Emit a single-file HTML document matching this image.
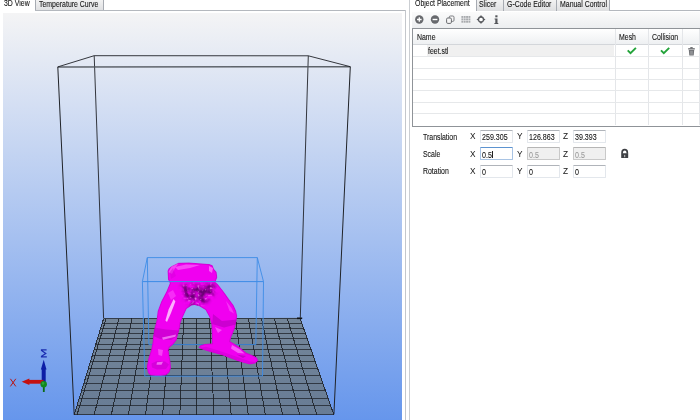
<!DOCTYPE html>
<html><head><meta charset="utf-8">
<style>
*{box-sizing:border-box;margin:0;padding:0}
html,body{width:700px;height:420px;overflow:hidden;background:#fff;font-family:"Liberation Sans",sans-serif;color:#111}
.a{position:absolute}
.t{position:absolute;white-space:nowrap;line-height:normal;transform-origin:0 0;-webkit-text-stroke:0.1px currentColor}
.tab{position:absolute;border:1px solid #a7abb2;border-bottom:none;background:linear-gradient(#f4f4f4,#dedfe1)}
.tb{position:absolute;height:13px;width:33px;border:1px solid #e3e7ec;border-top-color:#b0b4ba;background:#fff;border-radius:1px}
.tb.dis{background:#f0f0f0;border-color:#c9c9c9;border-top-color:#b5b5b5}
</style></head><body>

<svg width="700" height="420" style="position:absolute;left:0;top:0">
<defs><linearGradient id="bg" x1="0" y1="0" x2="0" y2="1"><stop offset="0" stop-color="#f4f4f5"/><stop offset="1" stop-color="#6696ec"/></linearGradient><clipPath id="vc"><rect x="3" y="13" width="399" height="407"/></clipPath></defs>
<g clip-path="url(#vc)">
<rect x="3" y="13" width="399" height="407" fill="url(#bg)"/>
<line x1="94.2" y1="55.7" x2="308.3" y2="55.8" stroke="#202328" stroke-width="0.9" stroke-opacity="1"/>
<line x1="94.2" y1="55.7" x2="103.6" y2="318.6" stroke="#202328" stroke-width="0.9" stroke-opacity="1"/>
<line x1="308.3" y1="55.8" x2="300.3" y2="317.8" stroke="#202328" stroke-width="0.9" stroke-opacity="1"/>
<defs><linearGradient id="bed" x1="0" y1="0" x2="0" y2="1"><stop offset="0" stop-color="#748699"/><stop offset="1" stop-color="#687c95"/></linearGradient></defs>
<polygon points="103.6,318.6 300.3,317.8 333.9,414.3 74.2,414.9" fill="url(#bed)"/>
<line x1="103.5" y1="318.9" x2="300.7" y2="318.9" stroke="#22272e" stroke-width="1" stroke-opacity="0.8" shape-rendering="crispEdges"/>
<line x1="102.0" y1="323.9" x2="302.4" y2="323.9" stroke="#22272e" stroke-width="1" stroke-opacity="0.8" shape-rendering="crispEdges"/>
<line x1="100.5" y1="328.6" x2="304.1" y2="328.6" stroke="#22272e" stroke-width="1" stroke-opacity="0.8" shape-rendering="crispEdges"/>
<line x1="99.0" y1="333.6" x2="305.8" y2="333.6" stroke="#22272e" stroke-width="1" stroke-opacity="0.8" shape-rendering="crispEdges"/>
<line x1="97.5" y1="338.6" x2="307.5" y2="338.6" stroke="#22272e" stroke-width="1" stroke-opacity="0.8" shape-rendering="crispEdges"/>
<line x1="95.8" y1="344.3" x2="309.5" y2="344.3" stroke="#22272e" stroke-width="1" stroke-opacity="0.8" shape-rendering="crispEdges"/>
<line x1="94.1" y1="349.7" x2="311.4" y2="349.7" stroke="#22272e" stroke-width="1" stroke-opacity="0.8" shape-rendering="crispEdges"/>
<line x1="92.3" y1="355.7" x2="313.5" y2="355.7" stroke="#22272e" stroke-width="1" stroke-opacity="0.8" shape-rendering="crispEdges"/>
<line x1="90.4" y1="361.7" x2="315.6" y2="361.7" stroke="#22272e" stroke-width="1" stroke-opacity="0.8" shape-rendering="crispEdges"/>
<line x1="88.3" y1="368.6" x2="318.0" y2="368.6" stroke="#22272e" stroke-width="1" stroke-opacity="0.8" shape-rendering="crispEdges"/>
<line x1="86.2" y1="375.6" x2="320.4" y2="375.6" stroke="#22272e" stroke-width="1" stroke-opacity="0.8" shape-rendering="crispEdges"/>
<line x1="83.9" y1="383.1" x2="323.0" y2="383.1" stroke="#22272e" stroke-width="1" stroke-opacity="0.8" shape-rendering="crispEdges"/>
<line x1="81.7" y1="390.4" x2="325.6" y2="390.4" stroke="#22272e" stroke-width="1" stroke-opacity="0.8" shape-rendering="crispEdges"/>
<line x1="79.3" y1="398.2" x2="328.3" y2="398.2" stroke="#22272e" stroke-width="1" stroke-opacity="0.8" shape-rendering="crispEdges"/>
<line x1="77.0" y1="405.6" x2="330.9" y2="405.6" stroke="#22272e" stroke-width="1" stroke-opacity="0.8" shape-rendering="crispEdges"/>
<line x1="74.3" y1="414.5" x2="334.0" y2="414.5" stroke="#22272e" stroke-width="1" stroke-opacity="0.8" shape-rendering="crispEdges"/>
<line x1="103.6" y1="318.6" x2="74.2" y2="414.9" stroke="#1b1f24" stroke-width="1" stroke-opacity="0.85" shape-rendering="crispEdges"/>
<line x1="106.1" y1="318.6" x2="77.0" y2="414.9" stroke="#1b1f24" stroke-width="1" stroke-opacity="0.85" shape-rendering="crispEdges"/>
<line x1="119.0" y1="318.6" x2="94.1" y2="414.9" stroke="#1b1f24" stroke-width="1" stroke-opacity="0.85" shape-rendering="crispEdges"/>
<line x1="132.0" y1="318.6" x2="111.3" y2="414.9" stroke="#1b1f24" stroke-width="1" stroke-opacity="0.85" shape-rendering="crispEdges"/>
<line x1="144.9" y1="318.6" x2="128.4" y2="414.9" stroke="#1b1f24" stroke-width="1" stroke-opacity="0.85" shape-rendering="crispEdges"/>
<line x1="157.9" y1="318.6" x2="145.5" y2="414.9" stroke="#1b1f24" stroke-width="1" stroke-opacity="0.85" shape-rendering="crispEdges"/>
<line x1="170.8" y1="318.6" x2="162.6" y2="414.9" stroke="#1b1f24" stroke-width="1" stroke-opacity="0.85" shape-rendering="crispEdges"/>
<line x1="183.7" y1="318.6" x2="179.8" y2="414.9" stroke="#1b1f24" stroke-width="1" stroke-opacity="0.85" shape-rendering="crispEdges"/>
<line x1="196.7" y1="318.6" x2="196.9" y2="414.9" stroke="#1b1f24" stroke-width="1" stroke-opacity="0.85" shape-rendering="crispEdges"/>
<line x1="209.6" y1="318.6" x2="214.0" y2="414.9" stroke="#1b1f24" stroke-width="1" stroke-opacity="0.85" shape-rendering="crispEdges"/>
<line x1="222.6" y1="318.6" x2="231.2" y2="414.9" stroke="#1b1f24" stroke-width="1" stroke-opacity="0.85" shape-rendering="crispEdges"/>
<line x1="235.5" y1="318.6" x2="248.3" y2="414.9" stroke="#1b1f24" stroke-width="1" stroke-opacity="0.85" shape-rendering="crispEdges"/>
<line x1="248.4" y1="318.6" x2="265.4" y2="414.9" stroke="#1b1f24" stroke-width="1" stroke-opacity="0.85" shape-rendering="crispEdges"/>
<line x1="261.4" y1="318.6" x2="282.6" y2="414.9" stroke="#1b1f24" stroke-width="1" stroke-opacity="0.85" shape-rendering="crispEdges"/>
<line x1="274.3" y1="318.6" x2="299.7" y2="414.9" stroke="#1b1f24" stroke-width="1" stroke-opacity="0.85" shape-rendering="crispEdges"/>
<line x1="287.3" y1="318.6" x2="316.8" y2="414.9" stroke="#1b1f24" stroke-width="1" stroke-opacity="0.85" shape-rendering="crispEdges"/>
<line x1="300.2" y1="318.6" x2="333.9" y2="414.9" stroke="#1b1f24" stroke-width="1" stroke-opacity="0.85" shape-rendering="crispEdges"/>
<line x1="57.8" y1="66.9" x2="350.3" y2="66.7" stroke="#50555c" stroke-width="1.5" stroke-opacity="0.9"/>
<line x1="297.0" y1="318.3" x2="302.2" y2="318.3" stroke="#101216" stroke-width="1.6" stroke-opacity="1"/>
<line x1="57.8" y1="66.9" x2="94.2" y2="55.7" stroke="#202328" stroke-width="0.9" stroke-opacity="1"/>
<line x1="350.3" y1="66.7" x2="308.3" y2="55.8" stroke="#202328" stroke-width="0.9" stroke-opacity="1"/>
<line x1="57.8" y1="66.9" x2="74.2" y2="414.9" stroke="#202328" stroke-width="1.0" stroke-opacity="1"/>
<line x1="350.3" y1="66.7" x2="333.9" y2="414.3" stroke="#202328" stroke-width="1.0" stroke-opacity="1"/>
<line x1="148.9" y1="344.6" x2="255.8" y2="344.6" stroke="#3d8ce6" stroke-width="0.9" stroke-opacity="1"/>
<line x1="147.3" y1="257.6" x2="148.9" y2="344.6" stroke="#3d8ce6" stroke-width="0.9" stroke-opacity="1"/>
<line x1="257.3" y1="257.6" x2="255.8" y2="344.6" stroke="#3d8ce6" stroke-width="0.9" stroke-opacity="1"/>
<defs>
<clipPath id="objclip"><path id="objpath" d="M167.5,271.1 L168.6,268.4 L171.4,266.2 L178.4,262.8 L188.9,262.4 L209.3,264.1 L212.5,265.2 L214,268.9 L216.6,272 L217.3,277.5 L215.4,282 L217.9,284.3 L223.6,291.4 L228.6,298.6 L233.6,305.2 L236.2,311 L237.2,316 L236.5,320.5 L235.2,327.5 L233.2,332.8 L231.4,337 L230.2,341.2 L235,344 L240.5,347.8 L246,352.5 L252.1,355.1 L256.5,357.3 L258.4,360.5 L255.3,363.5 L250,364.5 L243,362.7 L236.7,360.7 L222.1,355.3 L210,351.9 L202.1,349.5 L198.4,347.4 L200.8,345.1 L204.5,344 L212,343.2 L211.8,336 L211.4,324.3 L209.3,317.1 L205.5,310 L199.3,306.3 L194.5,305 L191.5,305.6 L186.6,309 L182.7,317.6 L180.6,323 L179.8,328.3 L178.6,332.6 L177.4,337 L176.6,340.2 L173.3,344.6 L169.6,347.4 L168.6,350 L169.5,356 L170.6,362 L171,368 L169.4,372.6 L165.8,375.4 L158,376.2 L150.2,375.6 L147.8,372.8 L146.7,367 L148.3,358.5 L151.2,349.5 L152.6,342 L153,337.1 L154.4,328.6 L156.6,320 L157.6,311.2 L161.2,301.4 L166.4,291.4 L169.8,283.2 L168,279.6 Z"/></clipPath>
<filter id="tex" x="0" y="0" width="1" height="1" color-interpolation-filters="sRGB">
<feTurbulence type="fractalNoise" baseFrequency="0.18" numOctaves="2" seed="11"/>
<feColorMatrix type="matrix" values="0 0 0 0 0.42  0 0 0 0 0  0 0 0 0 0.46  2.6 0 0 0 -0.85"/>
<feGaussianBlur stdDeviation="0.5"/>
</filter>
<filter id="tex2" x="0" y="0" width="1" height="1" color-interpolation-filters="sRGB">
<feTurbulence type="fractalNoise" baseFrequency="0.4" numOctaves="1" seed="5"/>
<feColorMatrix type="matrix" values="0 0 0 0 1  0 0 0 0 0.75  0 0 0 0 1  0 3 0 0 -1.75"/>
</filter>
<radialGradient id="waistmask" cx="0.5" cy="0.5" r="0.5"><stop offset="0" stop-color="#fff"/><stop offset="0.7" stop-color="#fff"/><stop offset="1" stop-color="#000"/></radialGradient>
<filter id="mblur"><feGaussianBlur stdDeviation="2"/></filter><mask id="wm"><path d="M181,285 L214,284 L216,291 L209,300 L201,305.5 L191,305.5 L185,299 Z" fill="#fff" filter="url(#mblur)"/></mask>
</defs>
<g clip-path="url(#objclip)">
<use href="#objpath" fill="#f000f0"/>
<use href="#objpath" fill="none" stroke="#a800b0" stroke-width="2.2" stroke-opacity="0.35"/>
<!-- waist band highlights -->
<path d="M175,267 L186,264.5 L200,265 L190,268 L178,270 Z" fill="#ff80ff" fill-opacity="0.55"/>
<path d="M168.5,272 L171.5,266.5 L178.6,263.2 L175,268 L172,274 Z" fill="#ff90ff" fill-opacity="0.45"/>
<path d="M170,272 L173,268 L176,276 L171,279 Z" fill="#d000d8" fill-opacity="0.45"/>
<path d="M209,266 L213,268 L212,273 L209,271 Z" fill="#ff9cff" fill-opacity="0.6"/>
<!-- dark textured waist -->
<path d="M188,288 L200,285 L213,286 L212,292 L205,299 L198,302 L192,300 L189,294 Z" fill="#8a0094" fill-opacity="0.35"/>
<rect x="165" y="280" width="60" height="28" fill="#000" filter="url(#tex)" mask="url(#wm)"/>
<rect x="165" y="280" width="60" height="28" filter="url(#tex2)" mask="url(#wm)"/>
<!-- left leg highlight -->
<path d="M173.6,299 L175.4,301.5 L171,313 L167,322 L165.4,320.5 L168.6,309.5 Z" fill="#ffc0ff" fill-opacity="0.9"/>
<path d="M168,293 L173,290 L176,296 L171,300 Z" fill="#ff70ff" fill-opacity="0.4"/>
<!-- left knee band -->
<path d="M154,327.5 L166,329.5 L179.5,330.5 L177.5,336 L171,340 L160,339 L153.5,336 Z" fill="#b400bc" fill-opacity="0.5"/>
<path d="M162,337.5 L176,334.5 L175.3,336.8 L163,339.8 Z" fill="#ffa0ff" fill-opacity="0.65"/>
<!-- left foot shoe details -->
<path d="M151.5,363.5 L157,361 L165,361.5 L169,364.5 L166,369 L157,369.5 L152,367.5 Z" fill="#b800c0" fill-opacity="0.45"/>
<path d="M157,362.3 L163,361.8 L161.5,364.8 L156.5,364.8 Z" fill="#ffa8ff" fill-opacity="0.6"/>
<path d="M158,349 L163,350 L162,356 L158.5,355 Z" fill="#ff90ff" fill-opacity="0.45"/>
<!-- right leg shading -->
<path d="M213,314 L222,321 L236.8,319.5 L236,324.5 L224,327.5 L212.2,324 Z" fill="#a000aa" fill-opacity="0.45"/>
<path d="M226,301 L231.5,308 L234,313.5 L229.5,311 Z" fill="#ff80ff" fill-opacity="0.4"/>
<path d="M215,327 L222,330 L218,333 Z" fill="#ff90ff" fill-opacity="0.5"/>
<!-- right foot -->
<path d="M199.5,348 L212,351.5 L236.5,359.5 L250.5,363.5 L256.5,362 L250,361.5 L236,356.5 L220,351 L206,346.8 Z" fill="#c000c8" fill-opacity="0.4"/>
<path d="M232,345 L240,349.5 L244.5,353.5 L238,353 L231,348.5 Z" fill="#ffa0ff" fill-opacity="0.55"/>
<path d="M236.5,354.5 L246,356 L243,358 Z" fill="#a000a8" fill-opacity="0.5"/>
</g>

<line x1="147.3" y1="257.6" x2="257.3" y2="257.6" stroke="#3d8ce6" stroke-width="0.9" stroke-opacity="1"/>
<line x1="142.4" y1="281.6" x2="263.5" y2="281.6" stroke="#3d8ce6" stroke-width="1.0" stroke-opacity="1"/>
<line x1="147.3" y1="257.6" x2="142.4" y2="281.6" stroke="#3d8ce6" stroke-width="0.9" stroke-opacity="1"/>
<line x1="257.3" y1="257.6" x2="263.5" y2="281.6" stroke="#3d8ce6" stroke-width="0.9" stroke-opacity="1"/>
<line x1="142.4" y1="281.6" x2="144.8" y2="376.2" stroke="#3d8ce6" stroke-width="0.9" stroke-opacity="1"/>
<line x1="263.5" y1="281.6" x2="262.5" y2="376.0" stroke="#3d8ce6" stroke-width="0.9" stroke-opacity="1"/>
<line x1="144.8" y1="376.2" x2="262.5" y2="376.0" stroke="#3d8ce6" stroke-width="0.9" stroke-opacity="1"/>
<g><path d="M40.9,349.8 H46.6 M41.2,350.2 L45.8,353.4 L41.2,356.6 M40.9,356.8 H46.8" fill="none" stroke="#1a2cb0" stroke-width="1.2"/><polygon points="43.7,359.8 40.9,369.4 46.5,369.4" fill="#0c1ea6"/><rect x="41.7" y="369" width="4" height="13.5" fill="#0c1ea6"/><polygon points="21.7,381.7 29.4,378.5 29.4,385" fill="#c41010"/><rect x="29" y="379.9" width="14.5" height="3.8" fill="#c41010"/><rect x="42.9" y="384" width="1.8" height="8" fill="#0b6a16"/><circle cx="43.7" cy="384.2" r="3.2" fill="#12881e"/><circle cx="43" cy="383.4" r="1.3" fill="#3cb84a" fill-opacity="0.6"/><path d="M10.4,378.8 L15.8,386.4 M15.8,378.8 L10.4,386.4" stroke="#b81414" stroke-width="1.0"/></g>
</g></svg>
<div class="t" style="left:3.60px;top:-2.14px;font-size:9px;transform:scaleX(0.77);color:#141414">3D View</div>
<div class="tab" style="left:35px;top:-2px;width:68.5px;height:12.5px"></div>
<div class="t" style="left:38.60px;top:-1.04px;font-size:9px;transform:scaleX(0.77);color:#141414">Temperature Curve</div>
<div class="a" style="left:35px;top:10px;width:371px;height:1px;background:#b4b8be"></div>
<div class="a" style="left:405px;top:10px;width:1px;height:410px;background:#c4c7cc"></div>
<div class="a" style="left:409px;top:0px;width:1px;height:420px;background:#cbced2"></div>
<div class="t" style="left:414.60px;top:-1.74px;font-size:9px;transform:scaleX(0.77);color:#141414">Object Placement</div>
<div class="tab" style="left:476.2px;top:-2px;width:28.0px;height:12.5px"></div>
<div class="t" style="left:479.00px;top:-1.04px;font-size:9px;transform:scaleX(0.77);color:#141414">Slicer</div>
<div class="tab" style="left:503.2px;top:-2px;width:53.4px;height:12.5px"></div>
<div class="t" style="left:506.60px;top:-1.04px;font-size:9px;transform:scaleX(0.77);color:#141414">G-Code Editor</div>
<div class="tab" style="left:555.6px;top:-2px;width:54.9px;height:12.5px"></div>
<div class="t" style="left:559.80px;top:-1.04px;font-size:9px;transform:scaleX(0.77);color:#141414">Manual Control</div>
<div class="a" style="left:609px;top:10px;width:91px;height:1px;background:#b4b8be"></div>
<div class="a" style="left:411.5px;top:11.5px;width:288.5px;height:16.5px;background:linear-gradient(#fbfbfb,#eceef0)"></div>
<svg class="a" style="left:410px;top:11px" width="100" height="17"><circle cx="9.3" cy="8.5" r="4.2" fill="#67696d"/><path d="M7,8.5 H11.6 M9.3,6.2 V10.8" stroke="#fff" stroke-width="1.3"/><circle cx="25" cy="8.5" r="4.2" fill="#67696d"/><path d="M22.6,8.5 H27.4" stroke="#fff" stroke-width="1.4"/><rect x="39.2" y="5" width="4.8" height="5.4" rx="1.2" fill="#f6f6f6" stroke="#7a7c80" stroke-width="1"/><rect x="36.6" y="7" width="4.8" height="5.4" rx="1.2" fill="#f6f6f6" stroke="#6a6c70" stroke-width="1"/><rect x="51.40" y="5.00" width="1.9" height="1.9" fill="#a9abae"/><rect x="51.40" y="7.40" width="1.9" height="1.9" fill="#a9abae"/><rect x="51.40" y="9.80" width="1.9" height="1.9" fill="#a9abae"/><rect x="53.75" y="5.00" width="1.9" height="1.9" fill="#a9abae"/><rect x="53.75" y="7.40" width="1.9" height="1.9" fill="#a9abae"/><rect x="53.75" y="9.80" width="1.9" height="1.9" fill="#a9abae"/><rect x="56.10" y="5.00" width="1.9" height="1.9" fill="#a9abae"/><rect x="56.10" y="7.40" width="1.9" height="1.9" fill="#a9abae"/><rect x="56.10" y="9.80" width="1.9" height="1.9" fill="#a9abae"/><rect x="58.45" y="5.00" width="1.9" height="1.9" fill="#a9abae"/><rect x="58.45" y="7.40" width="1.9" height="1.9" fill="#a9abae"/><rect x="58.45" y="9.80" width="1.9" height="1.9" fill="#a9abae"/><circle cx="71" cy="8.5" r="2.5" fill="#fff" stroke="#5a5c60" stroke-width="1.3"/><path d="M71,4 L72.6,6.2 H69.4 Z M71,13 L72.6,10.8 H69.4 Z M66.5,8.5 L68.7,6.9 V10.1 Z M75.5,8.5 L73.3,6.9 V10.1 Z" fill="#5a5c60"/><rect x="85.3" y="4.3" width="2.2" height="2" fill="#55575b"/><path d="M84.6,7.4 H87.5 V12 H88.3 V13 H84.4 V12 H85.3 V8.4 H84.6 Z" fill="#55575b"/></svg>
<div class="a" style="left:412px;top:28px;width:289px;height:98.6px;border:1px solid #8f9398;border-right:none;background:#fff"></div>
<div class="a" style="left:413px;top:29px;width:287px;height:15.5px;background:linear-gradient(#ffffff,#eef0f2);border-bottom:1px solid #d3d6da"></div>
<div class="t" style="left:417.30px;top:31.65px;font-size:9px;transform:scaleX(0.77);color:#141414">Name</div>
<div class="t" style="left:619.20px;top:31.65px;font-size:9px;transform:scaleX(0.77);color:#141414">Mesh</div>
<div class="t" style="left:651.80px;top:31.65px;font-size:9px;transform:scaleX(0.77);color:#141414">Collision</div>
<div class="a" style="left:615px;top:29px;width:1px;height:96px;background:#e4e6e9"></div>
<div class="a" style="left:648px;top:29px;width:1px;height:96px;background:#e4e6e9"></div>
<div class="a" style="left:682px;top:29px;width:1px;height:96px;background:#e4e6e9"></div>
<div class="a" style="left:699px;top:29px;width:1px;height:96px;background:#e4e6e9"></div>
<div class="a" style="left:427px;top:45px;width:187px;height:11px;background:#f0f0f0"></div>
<div class="t" style="left:427.60px;top:45.56px;font-size:9px;transform:scaleX(0.77);color:#141414">feet.stl</div>
<div class="a" style="left:413px;top:56.2px;width:287px;height:1px;background:#e6e8ea"></div>
<div class="a" style="left:413px;top:67.5px;width:287px;height:1px;background:#e6e8ea"></div>
<div class="a" style="left:413px;top:79.0px;width:287px;height:1px;background:#e6e8ea"></div>
<div class="a" style="left:413px;top:90.4px;width:287px;height:1px;background:#e6e8ea"></div>
<div class="a" style="left:413px;top:101.8px;width:287px;height:1px;background:#e6e8ea"></div>
<div class="a" style="left:413px;top:113.2px;width:287px;height:1px;background:#e6e8ea"></div>
<svg class="a" style="left:600px;top:40px" width="100" height="20"><path d="M27.7,10.4 L30.5,13.2 L35.9,7.8" fill="none" stroke="#23a33a" stroke-width="1.9"/><path d="M61.0,10.4 L63.8,13.2 L69.2,7.8" fill="none" stroke="#23a33a" stroke-width="1.9"/><rect x="88.2" y="8.2" width="6.6" height="1.3" fill="#66686c"/><rect x="90.3" y="7.1" width="2.4" height="1.3" fill="#66686c"/><path d="M88.8,9.9 H94.2 L93.7,15.6 H89.3 Z" fill="#707276"/><path d="M90.4,10.8 V14.8 M91.5,10.8 V14.8 M92.6,10.8 V14.8" stroke="#b0b2b5" stroke-width="0.5"/></svg>
<div class="t" style="left:422.80px;top:131.66px;font-size:9px;transform:scaleX(0.77);color:#141414">Translation</div>
<div class="t" style="left:422.60px;top:148.85px;font-size:9px;transform:scaleX(0.77);color:#141414">Scale</div>
<div class="t" style="left:423.00px;top:165.75px;font-size:9px;transform:scaleX(0.77);color:#141414">Rotation</div>
<div class="t" style="left:469.80px;top:131.45px;font-size:9px;transform:scaleX(0.92);color:#141414;-webkit-text-stroke:0">X</div>
<div class="tb" style="left:480.0px;top:130.0px"></div>
<div class="t" style="left:482.20px;top:131.11px;font-size:9.6px;transform:scaleX(0.74);color:#141414">259.305</div>
<div class="t" style="left:516.60px;top:131.45px;font-size:9px;transform:scaleX(0.92);color:#141414;-webkit-text-stroke:0">Y</div>
<div class="tb" style="left:527.0px;top:130.0px"></div>
<div class="t" style="left:529.20px;top:131.11px;font-size:9.6px;transform:scaleX(0.74);color:#141414">126.863</div>
<div class="t" style="left:562.80px;top:131.45px;font-size:9px;transform:scaleX(0.92);color:#141414;-webkit-text-stroke:0">Z</div>
<div class="tb" style="left:573.0px;top:130.0px"></div>
<div class="t" style="left:575.20px;top:131.11px;font-size:9.6px;transform:scaleX(0.74);color:#141414">39.393</div>
<div class="t" style="left:469.80px;top:148.85px;font-size:9px;transform:scaleX(0.92);color:#141414;-webkit-text-stroke:0">X</div>
<div class="tb" style="left:480.0px;top:147.4px;border-color:#a9c4e4;border-top-color:#5c93d0"></div>
<div class="t" style="left:482.20px;top:148.51px;font-size:9.6px;transform:scaleX(0.74);color:#141414">0.5</div>
<div class="t" style="left:516.60px;top:148.85px;font-size:9px;transform:scaleX(0.92);color:#141414;-webkit-text-stroke:0">Y</div>
<div class="tb dis" style="left:527.0px;top:147.4px"></div>
<div class="t" style="left:529.20px;top:148.51px;font-size:9.6px;transform:scaleX(0.74);color:#9c9c9c">0.5</div>
<div class="t" style="left:562.80px;top:148.85px;font-size:9px;transform:scaleX(0.92);color:#141414;-webkit-text-stroke:0">Z</div>
<div class="tb dis" style="left:573.0px;top:147.4px"></div>
<div class="t" style="left:575.20px;top:148.51px;font-size:9.6px;transform:scaleX(0.74);color:#9c9c9c">0.5</div>
<div class="t" style="left:469.80px;top:166.35px;font-size:9px;transform:scaleX(0.92);color:#141414;-webkit-text-stroke:0">X</div>
<div class="tb" style="left:480.0px;top:164.9px"></div>
<div class="t" style="left:482.20px;top:166.01px;font-size:9.6px;transform:scaleX(0.74);color:#141414">0</div>
<div class="t" style="left:516.60px;top:166.35px;font-size:9px;transform:scaleX(0.92);color:#141414;-webkit-text-stroke:0">Y</div>
<div class="tb" style="left:527.0px;top:164.9px"></div>
<div class="t" style="left:529.20px;top:166.01px;font-size:9.6px;transform:scaleX(0.74);color:#141414">0</div>
<div class="t" style="left:562.80px;top:166.35px;font-size:9px;transform:scaleX(0.92);color:#141414;-webkit-text-stroke:0">Z</div>
<div class="tb" style="left:573.0px;top:164.9px"></div>
<div class="t" style="left:575.20px;top:166.01px;font-size:9.6px;transform:scaleX(0.74);color:#141414">0</div>
<div class="a" style="left:492.2px;top:151.2px;width:0.8px;height:6.6px;background:#222"></div>
<svg class="a" style="left:619px;top:148px" width="12" height="12"><path d="M3.1,5.8 V4.6 A2.6,2.9 0 0 1 8.3,4.6 V5.8" fill="none" stroke="#3e4044" stroke-width="1.7"/><rect x="2.2" y="5.2" width="7" height="4.9" rx="0.6" fill="#3e4044"/><rect x="5.2" y="6.9" width="1" height="2.3" fill="#c8c8c8"/></svg>
</body></html>
